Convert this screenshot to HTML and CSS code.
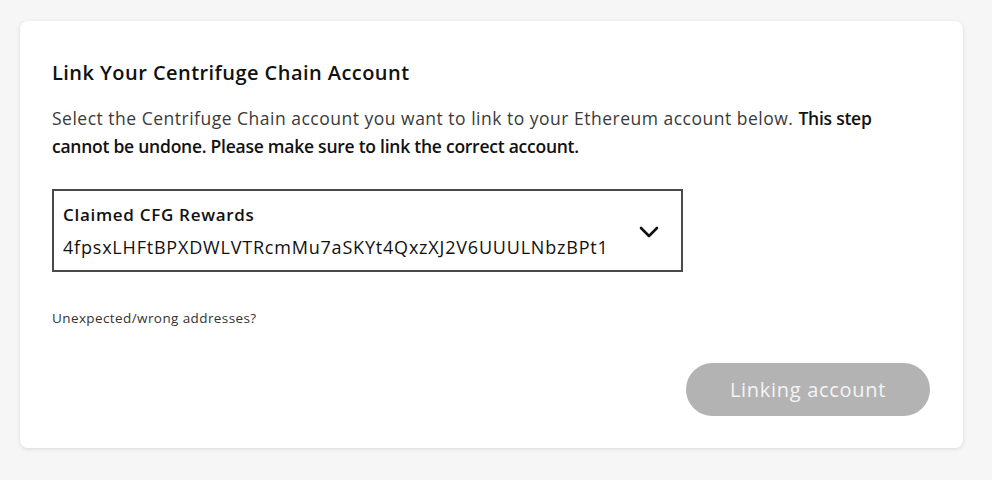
FILE: index.html
```html
<!DOCTYPE html>
<html>
<head>
<meta charset="utf-8">
<link rel="stylesheet" href="styles.css">
</head>
<body>
<div class="card">
  <h2 class="title">Link Your Centrifuge Chain Account</h2>
  <p class="desc">Select the Centrifuge Chain account you want to link to your Ethereum account below. <strong>This step cannot be undone. Please make sure to link the correct account.</strong></p>
  <div class="select">
    <div class="select-text">
      <div class="select-label">Claimed CFG Rewards</div>
      <div class="select-addr">4fpsxLHFtBPXDWLVTRcmMu7aSKYt4QxzXJ2V6UUULNbzBPt1</div>
    </div>
    <svg class="chevron" width="20" height="12" viewBox="0 0 20 12"><path d="M2 2 L10 10 L18 2" fill="none" stroke="#111" stroke-width="2.6" stroke-linecap="round" stroke-linejoin="round"/></svg>
  </div>
  <div class="hint">Unexpected/wrong addresses?</div>
  <div class="actions">
    <button class="btn">Linking account</button>
  </div>
</div>
</body>
</html>
```
FILE: styles.css
```css
html, body {
  margin: 0;
  padding: 0;
  background: #f6f6f7;
  font-family: "Open Sans", Lato, sans-serif;
  color: #1a1a1a;
}
body {
  padding: 21px 29px 0 20px;
  height: 480px;
  box-sizing: border-box;
}
.card {
  background: #fff;
  border-radius: 8px;
  box-shadow: 0 1px 4px rgba(0,0,0,0.12);
  padding: 40px 33px 32px 32px;
  height: 427px;
  box-sizing: border-box;
  display: flex;
  flex-direction: column;
}
.title {
  margin: 0;
  font-size: 20px;
  font-weight: 600;
  line-height: 24px;
  letter-spacing: 0.45px;
  color: #111;
}
.desc {
  margin: 19px 0 0 0;
  font-size: 17.5px;
  line-height: 28px;
  letter-spacing: 0.5px;
  color: #3a3a3a;
  max-width: 850px;
}
.desc strong {
  font-weight: 600;
  letter-spacing: -0.25px;
  color: #111;
}
.select {
  margin-top: 29px;
  width: 631px;
  height: 83px;
  box-sizing: border-box;
  border: 2px solid #4a4a4a;
  display: flex;
  align-items: flex-start;
  padding: 13px 22px 0 9px;
}
.select-text {
  flex: 1;
}
.select-label {
  font-size: 17px;
  font-weight: 600;
  line-height: 22px;
  letter-spacing: 0.7px;
  color: #111;
}
.select-addr {
  margin-top: 10px;
  font-size: 18px;
  line-height: 22px;
  letter-spacing: 0.8px;
  color: #111;
}
.chevron {
  margin-top: 22px;
}
.hint {
  margin-top: 38px;
  font-size: 13.5px;
  line-height: 16px;
  letter-spacing: 0.4px;
  color: #333;
}
.actions {
  margin-top: auto;
  display: flex;
  justify-content: flex-end;
}
.btn {
  width: 244px;
  height: 53px;
  border: none;
  border-radius: 27px;
  background: #b3b3b3;
  color: #f4f4f4;
  font-family: "Open Sans", Lato, sans-serif;
  font-size: 20px;
  font-weight: 400;
  letter-spacing: 0.7px;
}
```
